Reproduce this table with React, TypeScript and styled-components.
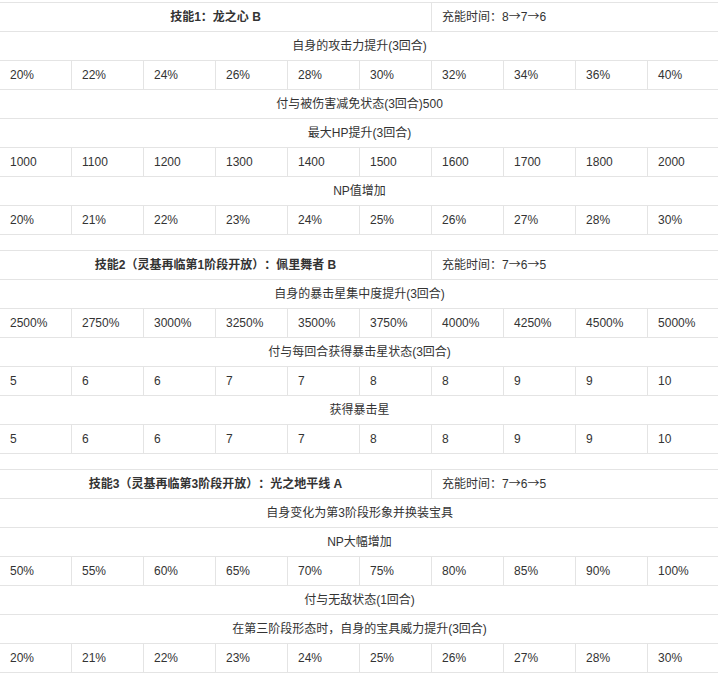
import React from 'react';
import styled, { createGlobalStyle } from 'styled-components';

const GlobalStyle = createGlobalStyle`
  html, body {
    margin: 0;
    padding: 0;
    background: #ffffff;
    overflow: hidden;
  }
  body {
    font-family: "Liberation Sans", Arial, "Noto Sans CJK SC", sans-serif;
    font-size: 12px;
    color: #333333;
    text-spacing-trim: space-all;
  }
`;

const Page = styled.div`
  padding-top: 2px;
  margin-left: -1px;
  width: 722px;
`;

const SkillTable = styled.table`
  width: 721px;
  table-layout: fixed;
  border-collapse: collapse;
  margin-bottom: 15px;
`;

const Cell = styled.td<{ $align?: 'left' | 'center'; $bold?: boolean }>`
  border: 1px solid #e4e4e4;
  height: 28px;
  padding: 0 10px;
  box-sizing: border-box;
  text-align: ${(p) => p.$align ?? 'left'};
  font-weight: ${(p) => (p.$bold ? 700 : 400)};
  white-space: nowrap;
  vertical-align: middle;
  line-height: 28px;
`;

// the cooldown arrows are drawn full width, like the CJK font gives them
const Arrow = styled.span`
  font-family: "Noto Sans CJK SC", sans-serif;
  line-height: 1;
`;

type Row = { kind: 'desc'; text: string } | { kind: 'values'; values: string[] };

interface Skill {
  title: string;
  charge: number[];
  rows: Row[];
}

const pct = (list: number[]) => list.map((n) => `${n}%`);
const nums = (list: number[]) => list.map((n) => `${n}`);

const skills: Skill[] = [
  {
    title: '技能1：龙之心 B',
    charge: [8, 7, 6],
    rows: [
      { kind: 'desc', text: '自身的攻击力提升(3回合)' },
      { kind: 'values', values: pct([20, 22, 24, 26, 28, 30, 32, 34, 36, 40]) },
      { kind: 'desc', text: '付与被伤害减免状态(3回合)500' },
      { kind: 'desc', text: '最大HP提升(3回合)' },
      { kind: 'values', values: nums([1000, 1100, 1200, 1300, 1400, 1500, 1600, 1700, 1800, 2000]) },
      { kind: 'desc', text: 'NP值增加' },
      { kind: 'values', values: pct([20, 21, 22, 23, 24, 25, 26, 27, 28, 30]) },
    ],
  },
  {
    title: '技能2（灵基再临第1阶段开放）：佩里舞者 B',
    charge: [7, 6, 5],
    rows: [
      { kind: 'desc', text: '自身的暴击星集中度提升(3回合)' },
      { kind: 'values', values: pct([2500, 2750, 3000, 3250, 3500, 3750, 4000, 4250, 4500, 5000]) },
      { kind: 'desc', text: '付与每回合获得暴击星状态(3回合)' },
      { kind: 'values', values: nums([5, 6, 6, 7, 7, 8, 8, 9, 9, 10]) },
      { kind: 'desc', text: '获得暴击星' },
      { kind: 'values', values: nums([5, 6, 6, 7, 7, 8, 8, 9, 9, 10]) },
    ],
  },
  {
    title: '技能3（灵基再临第3阶段开放）：光之地平线 A',
    charge: [7, 6, 5],
    rows: [
      { kind: 'desc', text: '自身变化为第3阶段形象并换装宝具' },
      { kind: 'desc', text: 'NP大幅增加' },
      { kind: 'values', values: pct([50, 55, 60, 65, 70, 75, 80, 85, 90, 100]) },
      { kind: 'desc', text: '付与无敌状态(1回合)' },
      { kind: 'desc', text: '在第三阶段形态时，自身的宝具威力提升(3回合)' },
      { kind: 'values', values: pct([20, 21, 22, 23, 24, 25, 26, 27, 28, 30]) },
    ],
  },
];

const Charge: React.FC<{ steps: number[] }> = ({ steps }) => (
  <>
    充能时间：
    {steps.map((s, i) => (
      <React.Fragment key={i}>
        {i > 0 && <Arrow>→</Arrow>}
        {s}
      </React.Fragment>
    ))}
  </>
);

const SkillBlock: React.FC<{ skill: Skill }> = ({ skill }) => (
  <SkillTable>
    <colgroup>
      {Array.from({ length: 10 }).map((_, i) => (
        <col key={i} style={{ width: 72 }} />
      ))}
    </colgroup>
    <tbody>
      <tr>
        <Cell colSpan={6} $align="center" $bold>
          {skill.title}
        </Cell>
        <Cell colSpan={4}>
          <Charge steps={skill.charge} />
        </Cell>
      </tr>
      {skill.rows.map((row, i) =>
        row.kind === 'desc' ? (
          <tr key={i}>
            <Cell colSpan={10} $align="center">
              {row.text}
            </Cell>
          </tr>
        ) : (
          <tr key={i}>
            {row.values.map((v, j) => (
              <Cell key={j}>{v}</Cell>
            ))}
          </tr>
        )
      )}
    </tbody>
  </SkillTable>
);

const App: React.FC = () => (
  <>
    <GlobalStyle />
    <Page>
      {skills.map((s) => (
        <SkillBlock key={s.title} skill={s} />
      ))}
    </Page>
  </>
);

export default App;
